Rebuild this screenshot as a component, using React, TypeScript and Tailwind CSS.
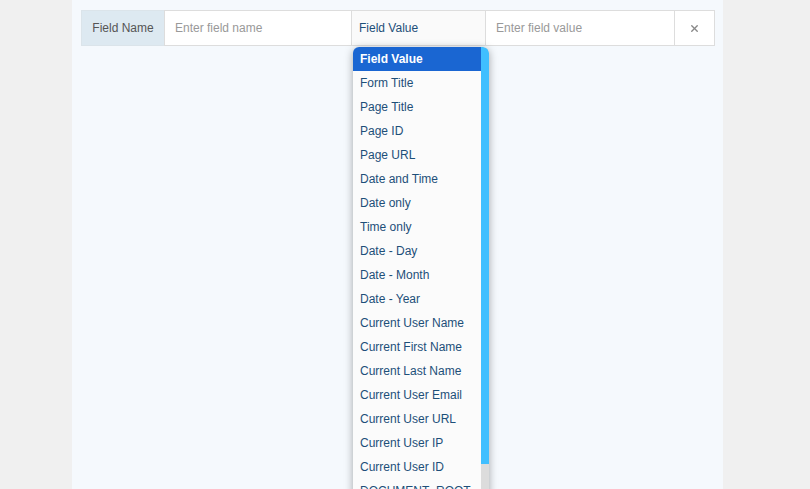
import { X } from "lucide-react";

const options = [
  "Field Value",
  "Form Title",
  "Page Title",
  "Page ID",
  "Page URL",
  "Date and Time",
  "Date only",
  "Time only",
  "Date - Day",
  "Date - Month",
  "Date - Year",
  "Current User Name",
  "Current First Name",
  "Current Last Name",
  "Current User Email",
  "Current User URL",
  "Current User IP",
  "Current User ID",
  "DOCUMENT_ROOT",
  "HTTP_REFERER",
];

const OptionList = () => {
  return (
    <div className="absolute left-[1px] top-[36px] w-[136px] h-[460px] overflow-hidden rounded-t-[6px] bg-[#fbfbfb] shadow-[0_2px_8px_rgba(0,0,0,0.35)] z-10">
      <div className="pr-[8px]">
        {options.map((opt, i) => (
          <div
            key={opt}
            className={
              i === 0
                ? "h-[24px] flex items-center px-[7px] bg-[#1a66d2] text-white font-bold"
                : "h-[24px] flex items-center px-[7px] text-[#1d4f79]"
            }
          >
            {opt}
          </div>
        ))}
      </div>
      {/* scrollbar */}
      <div className="absolute right-0 top-0 bottom-0 w-[8px] bg-[#dcdcdc]">
        <div className="h-[417px] w-full bg-[#40bfff] rounded-tr-[6px]" />
      </div>
    </div>
  );
}

export default function App() {
  return (
    <div className="min-h-screen w-full bg-[#f0f0f0] pl-[72px] text-[12px]" style={{ fontFamily: '"Liberation Sans", Arial, sans-serif' }}>
      <div className="w-[651px] min-h-screen bg-[#f5f9fd] pt-[10px] pl-[9px] pr-[8px]">
        <div className="flex h-[36px]">
          <div className="w-[83px] flex items-center justify-center bg-[#dde9f1] border border-[#dbe4ea] border-r-0 text-[#555]">
            Field Name
          </div>
          <div className="w-[188px] flex items-center bg-white border border-[#dddddd] px-[10px] text-[#999]">
            Enter field name
          </div>
          <div className="relative w-[134px] flex items-center bg-[#fafafa] border border-[#dddddd] border-l-0 px-[7px] text-[#1d4f79]">
            Field Value
            <OptionList />
          </div>
          <div className="w-[189px] flex items-center bg-white border border-[#dddddd] border-l-0 px-[10px] text-[#999]">
            Enter field value
          </div>
          <div className="w-[40px] flex items-center justify-center bg-white border border-[#dddddd] border-l-0 text-[#888]">
            <X size={11} strokeWidth={3} />
          </div>
        </div>
      </div>
    </div>
  );
}
